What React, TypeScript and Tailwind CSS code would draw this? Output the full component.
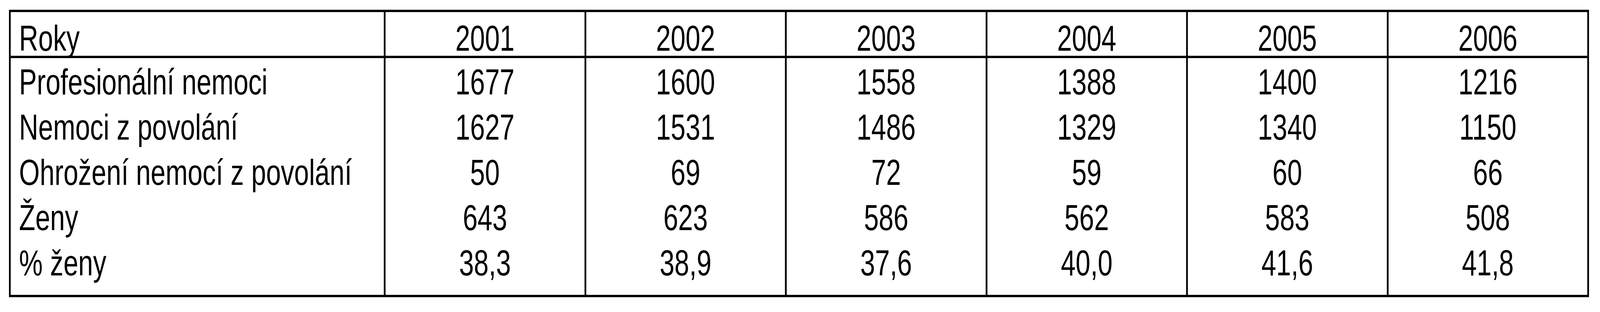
import React, { useLayoutEffect, useState } from "react";

const years = ["2001", "2002", "2003", "2004", "2005", "2006"];

const rows: { label: string; values: string[] }[] = [
  { label: "Profesionální nemoci", values: ["1677", "1600", "1558", "1388", "1400", "1216"] },
  { label: "Nemoci z povolání", values: ["1627", "1531", "1486", "1329", "1340", "1150"] },
  { label: "Ohrožení nemocí z povolání", values: ["50", "69", "72", "59", "60", "66"] },
  { label: "Ženy", values: ["643", "623", "586", "562", "583", "508"] },
  { label: "% ženy", values: ["38,3", "38,9", "37,6", "40,0", "41,6", "41,8"] },
];

const DESIGN_WIDTH = 5532;

function useFitScale() {
  const [k, setK] = useState(1);
  useLayoutEffect(() => {
    const update = () => {
      const w = document.documentElement.clientWidth || window.innerWidth;
      setK(Math.min(1, w / DESIGN_WIDTH));
    };
    update();
    window.addEventListener("resize", update);
    return () => window.removeEventListener("resize", update);
  }, []);
  return k;
}

export default function App() {
  const k = useFitScale();
  return (
    <div className="w-full h-[800px] overflow-hidden bg-white">
      <div
        className="w-[5532px] h-[800px] bg-white pt-[25px] pl-[31px] text-black text-[92px] origin-top-left"
        style={{ fontFamily: '"Liberation Sans", Arial, sans-serif', transform: `scaleX(${k})` }}
      >
        <div className="w-[5463px] border-[6px] border-black">
          <div className="grid grid-cols-[1290px_repeat(6,1fr)] border-b-[6px] border-black">
            <div className="h-[112px] pt-[21px] pl-[29px] leading-[92px] whitespace-nowrap">Roky</div>
            {years.map((y) => (
              <div key={y} className="h-[112px] pt-[21px] leading-[92px] text-center border-l-[6px] border-black">
                {y}
              </div>
            ))}
          </div>
          {rows.map((r, i) => {
            const pad = i === 0 ? "pt-[3px]" : i === rows.length - 1 ? "pb-[24px]" : "";
            return (
              <div key={r.label} className="grid grid-cols-[1290px_repeat(6,1fr)]">
                <div className={`pl-[29px] leading-[116px] whitespace-nowrap ${pad}`}>{r.label}</div>
                {r.values.map((v, j) => (
                  <div key={j} className={`leading-[116px] text-center border-l-[6px] border-black ${pad}`}>
                    {v}
                  </div>
                ))}
              </div>
            );
          })}
        </div>
      </div>
    </div>
  );
}
